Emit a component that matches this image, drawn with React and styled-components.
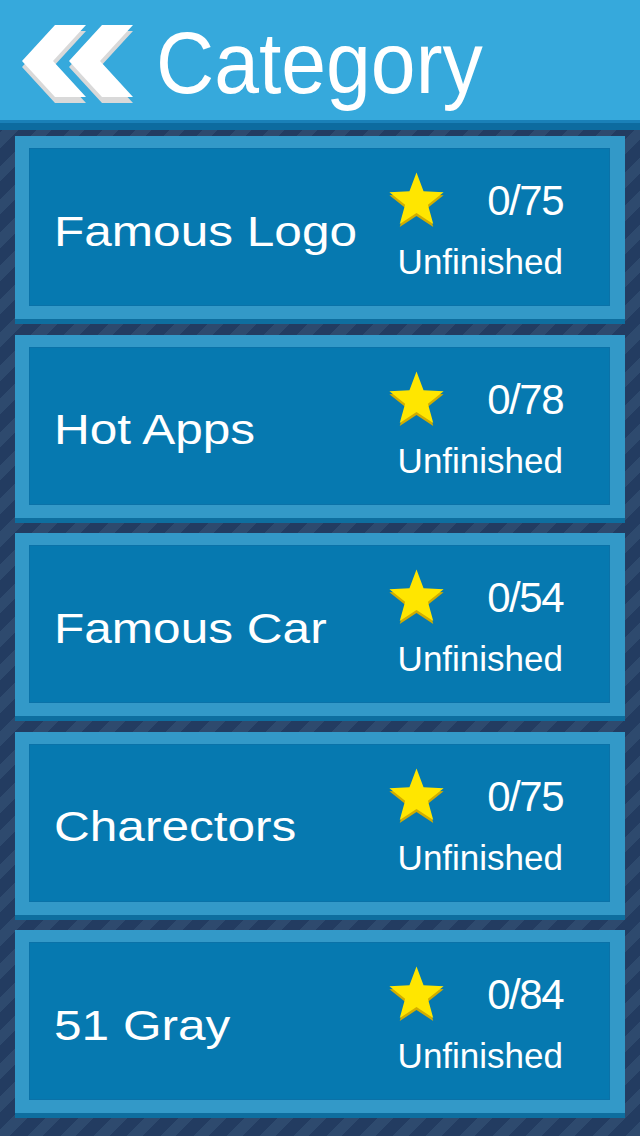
import React from "react";
import styled, { createGlobalStyle } from "styled-components";

const Global = createGlobalStyle`
  html, body { margin: 0; padding: 0; background: #233b5f; }
  body { font-family: "Liberation Sans", Arial, sans-serif; }
`;

const Screen = styled.div`
  width: 640px;
  height: 1136px;
  overflow: hidden;
  background: repeating-linear-gradient(
    135deg,
    #2e4a6e 0px,
    #2e4a6e 11px,
    #233c61 11px,
    #233c61 23.5px
  );
  font-family: "Liberation Sans", Arial, sans-serif;
  color: #ffffff;
`;

const Header = styled.header`
  height: 120px;
  background: #36a9dc;
  display: flex;
  align-items: flex-start;
  padding-left: 22px;
  box-shadow: 0 3px 0 #1a80b8, 0 10px 0 #0d6b9f;
  position: relative;
  z-index: 1;
`;

const BackIcon = styled.svg`
  display: block;
  margin-top: 24px;
  flex: none;
`;

const Title = styled.h1`
  margin: 19px 0 0 22px;
  font-size: 88px;
  line-height: 88px;
  font-weight: 400;
  transform: scaleX(0.915);
  transform-origin: left center;
  white-space: nowrap;
`;

const List = styled.div`
  display: flex;
  flex-direction: column;
  gap: 10.5px;
  padding: 16px 15px 0 15px;
`;

const Card = styled.div`
  background: #3399c8;
  padding: 12px 15px 13px 14px;
  border-bottom: 5px solid #0e6e9f;
`;

const Inner = styled.div`
  height: 158px;
  box-sizing: border-box;
  background: #0679b0;
  box-shadow: inset 0 0 0 1px #0a72a8;
  display: flex;
  align-items: center;
  justify-content: space-between;
  padding: 0 47px 0 25px;
`;

const Name = styled.div`
  font-size: 42px;
  line-height: 50px;
  margin-top: 9px;
  white-space: nowrap;
  transform: scaleX(1.18);
  transform-origin: left center;
`;

const Stats = styled.div`
  width: 175px;
  display: flex;
  flex-direction: column;
  gap: 12px;
`;

const StarRow = styled.div`
  height: 58px;
  display: flex;
  align-items: center;
  justify-content: space-between;
`;

const Count = styled.span`
  font-size: 42px;
  line-height: 46px;
  letter-spacing: -1.5px;
`;

const Status = styled.div`
  font-size: 35px;
  line-height: 40px;
  text-align: right;
  white-space: nowrap;
`;

const starPts =
  "28.5,0.5 35.55,19.29 55.61,20.19 39.91,32.71 45.25,52.06 28.5,41 11.75,52.06 17.09,32.71 1.39,20.19 21.45,19.29";

const Star = () => (
  <svg width="57" height="58" viewBox="0 0 57 58">
    <polygon points={starPts} fill="#d1ad00" transform="translate(0,3)" />
    <polygon points={starPts} fill="#ffe600" />
  </svg>
);

const chev = (dx) =>
  [
    [33, 1],
    [64, 1],
    [31, 37],
    [64, 73],
    [33, 73],
    [0, 37],
  ]
    .map(([x, y]) => `${x + dx},${y}`)
    .join(" ");

const Back = () => (
  <BackIcon width="112" height="80" viewBox="0 0 112 80">
    <polygon points={chev(0)} fill="#d9d9d9" transform="translate(0,6)" />
    <polygon points={chev(0)} fill="#ffffff" />
    <polygon points={chev(47)} fill="#d9d9d9" transform="translate(0,6)" />
    <polygon points={chev(47)} fill="#ffffff" />
  </BackIcon>
);

const categories = [
  { name: "Famous Logo", done: 0, total: 75 },
  { name: "Hot Apps", done: 0, total: 78 },
  { name: "Famous Car", done: 0, total: 54 },
  { name: "Charectors", done: 0, total: 75 },
  { name: "51 Gray", done: 0, total: 84 },
];

export default function App() {
  return (
    <>
      <Global />
      <Screen>
        <Header>
          <Back />
          <Title>Category</Title>
        </Header>
        <List>
          {categories.map((c) => (
            <Card key={c.name}>
              <Inner>
                <Name>{c.name}</Name>
                <Stats>
                  <StarRow>
                    <Star />
                    <Count>
                      {c.done}/{c.total}
                    </Count>
                  </StarRow>
                  <Status>Unfinished</Status>
                </Stats>
              </Inner>
            </Card>
          ))}
        </List>
      </Screen>
    </>
  );
}
